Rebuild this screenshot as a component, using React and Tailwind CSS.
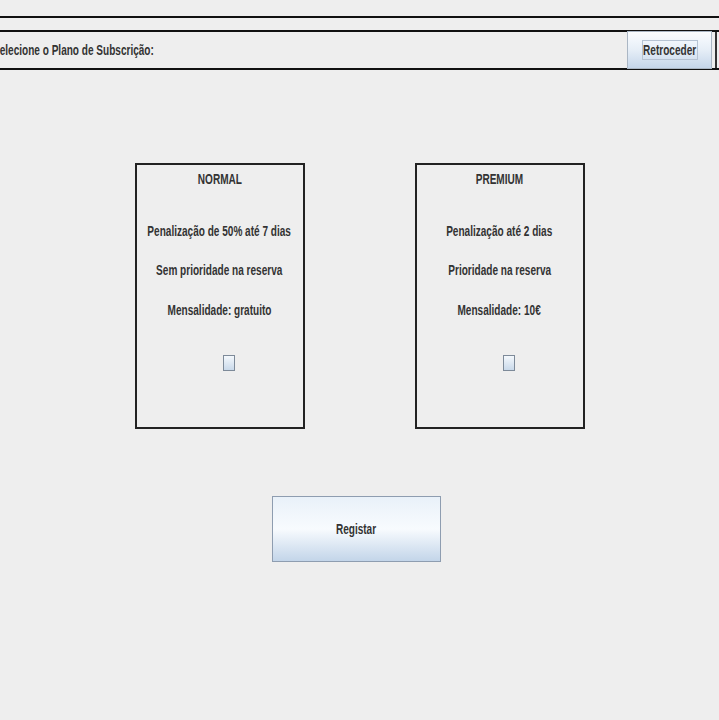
const font = { fontFamily: '"Liberation Sans", Arial, sans-serif' };

// the screenshot is squeezed horizontally, so text is scaled on x
const Narrow = ({ children, className = "" }) => (
  <span className={"inline-block whitespace-nowrap scale-x-[0.67] " + className}>{children}</span>
);

const PlanCard = ({ title, lines }) => {
  return (
    <div className="w-[170px] h-[266px] border-2 border-[#222] flex flex-col items-center text-[#333] text-[15px] font-bold">
      <Narrow className="mt-[6px] leading-[16px]">{title}</Narrow>
      <Narrow className="mt-[36px] leading-[16px]">{lines[0]}</Narrow>
      <Narrow className="mt-[23px] leading-[16px]">{lines[1]}</Narrow>
      <Narrow className="mt-[24px] leading-[16px]">{lines[2]}</Narrow>
      <span className="mt-[37px] ml-[18px] w-[12px] h-[16px] border border-[#7d8a99] bg-gradient-to-b from-[#f4f8fc] to-[#c9d9ea]" />
    </div>
  );
};

export default function App() {
  return (
    <div className="w-[719px] h-[720px] bg-[#eeeeee] overflow-hidden" style={font}>
      <div className="h-[16px]" />
      <div className="h-[14px] border-t-2 border-[#111]" />
      {/* header bar */}
      <div className="h-[40px] border-y-2 border-[#111] flex items-center">
        <div className="flex-1 min-w-0">
          <Narrow className="ml-[-7px] origin-left text-[15px] font-bold text-[#333] leading-[16px]">
            Selecione o Plano de Subscrição:
          </Narrow>
        </div>
        <button className="h-[38px] w-[85px] border border-[#aab6c4] bg-gradient-to-b from-[#fbfdff] via-[#e6eef7] to-[#c5d6ea] flex items-center justify-center">
          <span className="w-[56px] h-[20px] border border-[#b6c3d3] flex items-center justify-center text-[15px] font-bold text-[#333]">
            <Narrow className="leading-[18px]">Retroceder</Narrow>
          </span>
        </button>
        <div className="w-[3px]" />
        <div className="w-[2px] h-full bg-[#333]" />
        <div className="w-[2px]" />
      </div>

      <div className="mt-[93px] flex justify-center gap-[110px]">
        <PlanCard
          title="NORMAL"
          lines={["Penalização de 50% até 7 dias", "Sem prioridade na reserva", "Mensalidade: gratuito"]}
        />
        <PlanCard
          title="PREMIUM"
          lines={["Penalização até 2 dias", "Prioridade na reserva", "Mensalidade: 10€"]}
        />
      </div>

      <div className="mt-[67px] flex justify-center pr-[7px]">
        <button className="w-[169px] h-[66px] border border-[#8e9db0] bg-gradient-to-b from-[#e9f1f9] via-[#f8fbfe] to-[#c3d5e9] text-[15px] font-bold text-[#333]">
          <Narrow>Registar</Narrow>
        </button>
      </div>
    </div>
  );
}
